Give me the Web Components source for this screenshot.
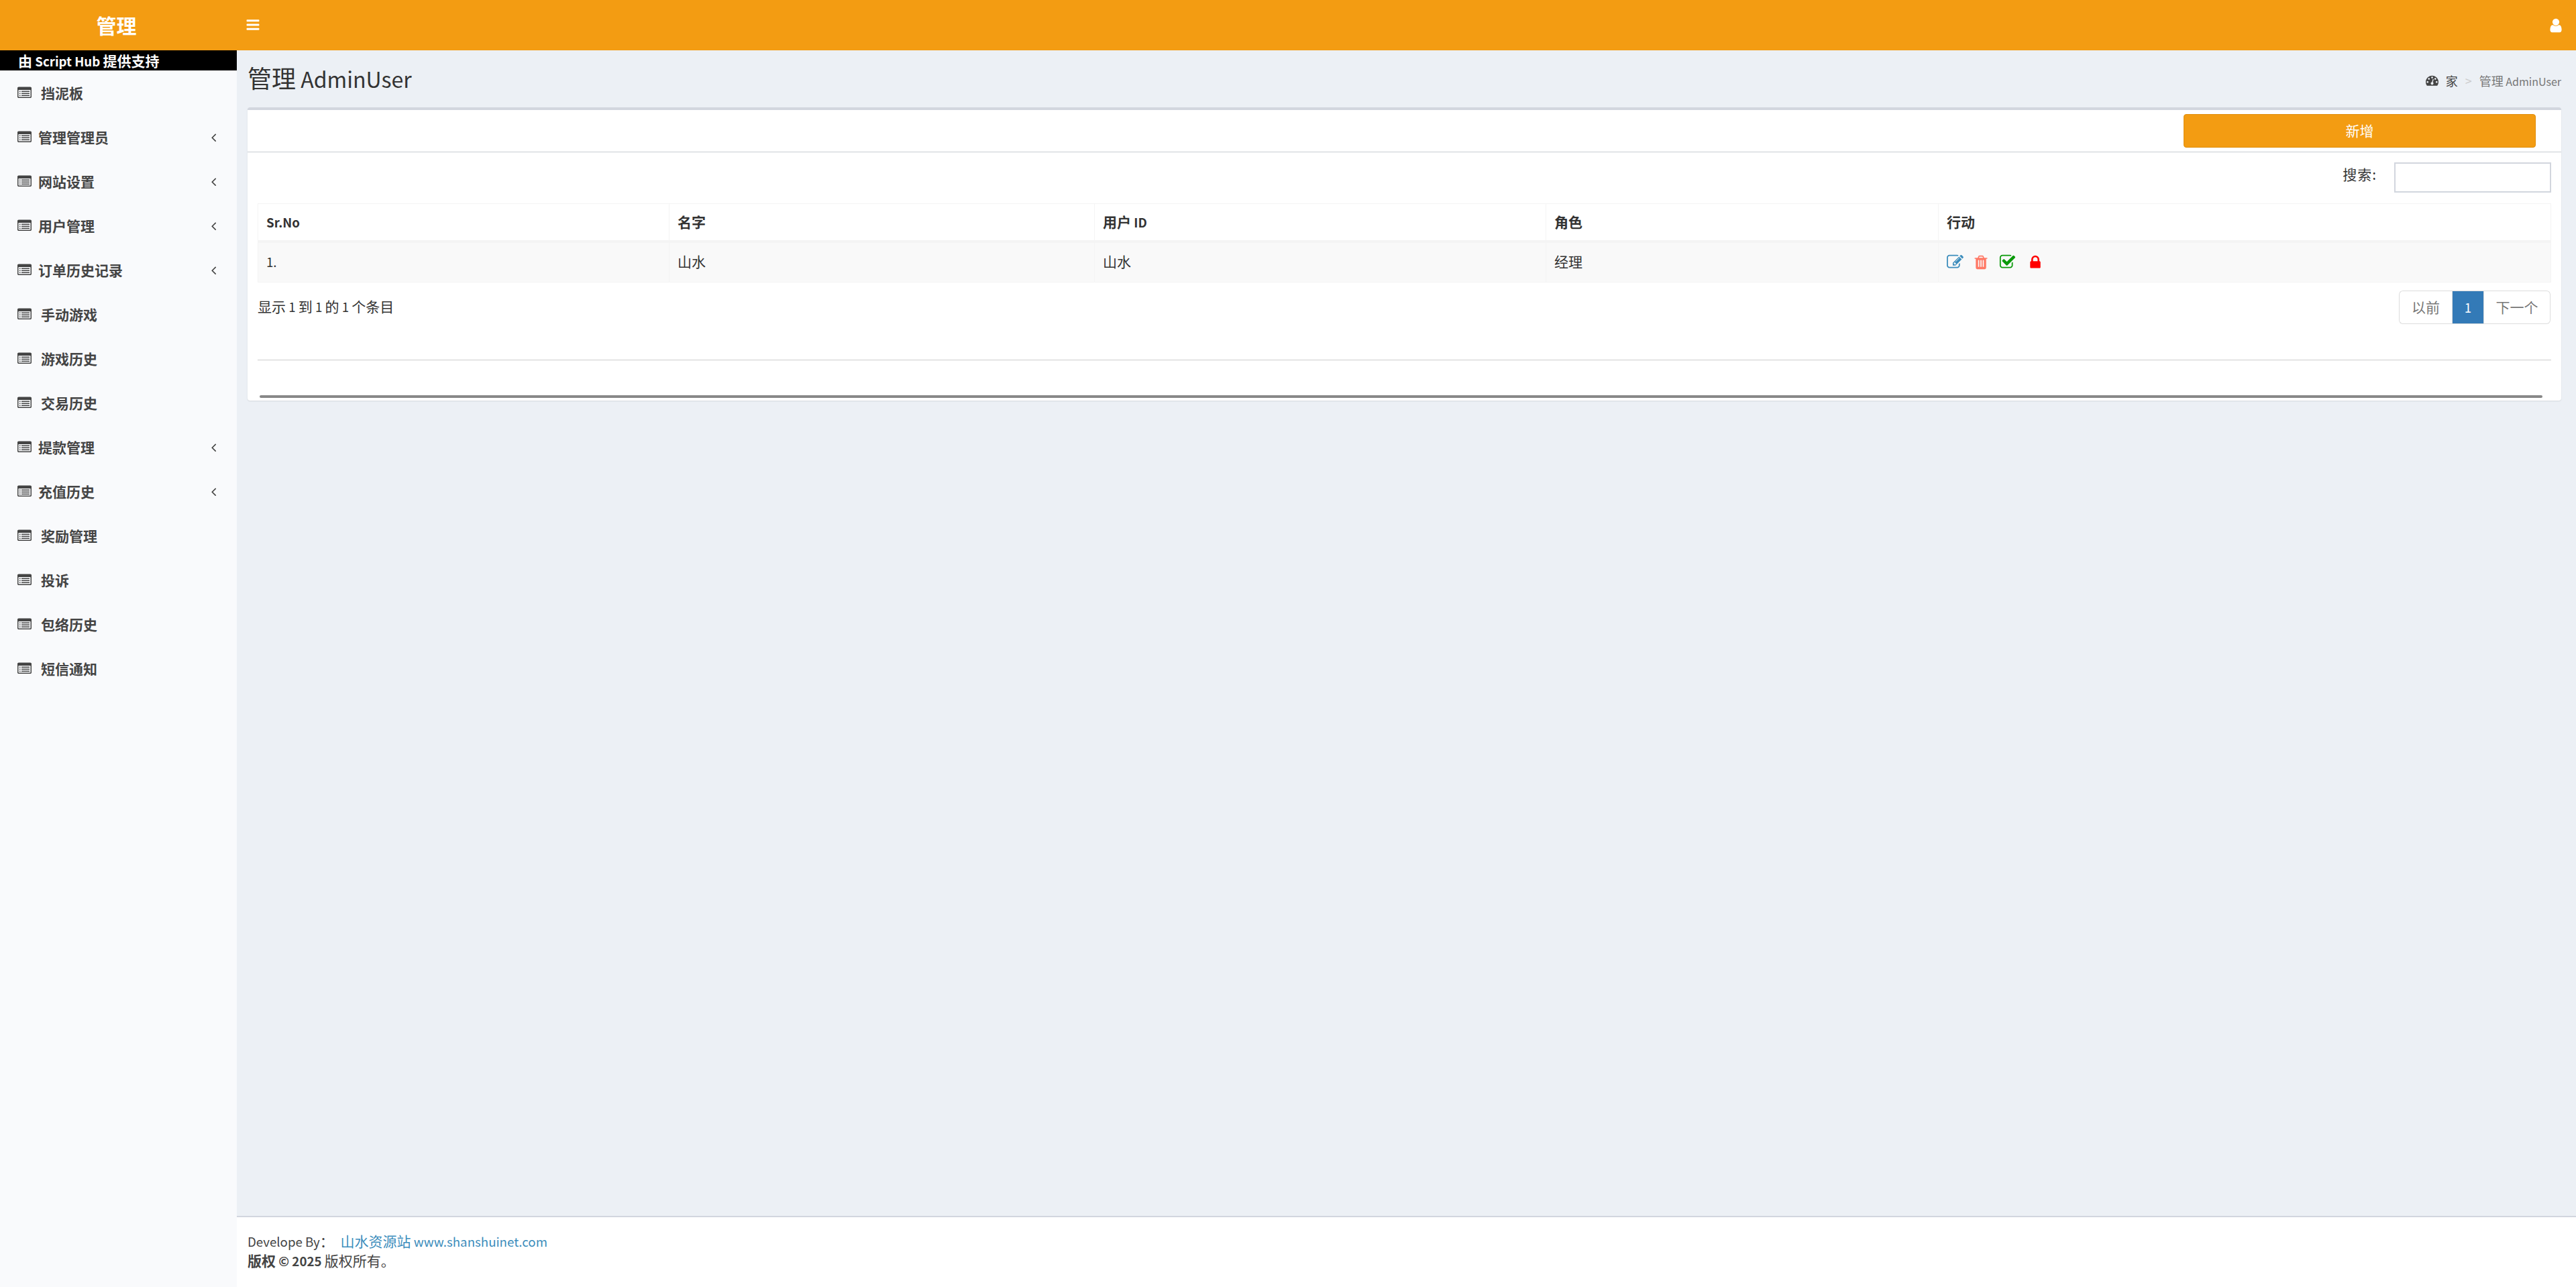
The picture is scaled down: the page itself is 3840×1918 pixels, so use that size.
<!DOCTYPE html>
<html lang="zh">
<head>
<meta charset="utf-8">
<title>管理 AdminUser</title>
<style>
html, body { margin:0; height:100%; }
body {
  font-family:"Noto Sans CJK SC","Noto Sans",sans-serif;
  font-size:21px;
  color:#333;
  background:#ecf0f5;
  overflow:hidden;
}
</style>
</head>
<body>
<admin-shell>
  <top-bar slot="top" brand="管理"></top-bar>
  <side-bar slot="side">
    <nav-item label="挡泥板"></nav-item>
    <nav-item label="管理管理员" sub></nav-item>
    <nav-item label="网站设置" sub></nav-item>
    <nav-item label="用户管理" sub></nav-item>
    <nav-item label="订单历史记录" sub></nav-item>
    <nav-item label="手动游戏"></nav-item>
    <nav-item label="游戏历史"></nav-item>
    <nav-item label="交易历史"></nav-item>
    <nav-item label="提款管理" sub></nav-item>
    <nav-item label="充值历史" sub></nav-item>
    <nav-item label="奖励管理"></nav-item>
    <nav-item label="投诉"></nav-item>
    <nav-item label="包络历史"></nav-item>
    <nav-item label="短信通知"></nav-item>
  </side-bar>
  <page-title slot="main"></page-title>
  <user-panel slot="main"></user-panel>
  <page-footer slot="foot"></page-footer>
</admin-shell>

<script>
/* icon paths, 1792 box */
const ICONS = {
  bars:"M1664 1344v128q0 26-19 45t-45 19h-1408q-26 0-45-19t-19-45v-128q0-26 19-45t45-19h1408q26 0 45 19t19 45zm0-512v128q0 26-19 45t-45 19h-1408q-26 0-45-19t-19-45v-128q0-26 19-45t45-19h1408q26 0 45 19t19 45zm0-512v128q0 26-19 45t-45 19h-1408q-26 0-45-19t-19-45v-128q0-26 19-45t45-19h1408q26 0 45 19t19 45z",
  user:"M1536 1399q0 109-62.5 187t-150.5 78h-854q-88 0-150.5-78t-62.5-187q0-85 8.5-160.5t31.5-152 58.5-131 94-89 134.5-34.5q131 128 313 128t313-128q76 0 134.5 34.5t94 89 58.5 131 31.5 152 8.5 160.5zm-256-887q0 159-112.5 271.5t-271.5 112.5-271.5-112.5-112.5-271.5 112.5-271.5 271.5-112.5 271.5 112.5 112.5 271.5z",
  list:"M384 1184v64q0 13-9.5 22.5t-22.5 9.5h-64q-13 0-22.5-9.5t-9.5-22.5v-64q0-13 9.5-22.5t22.5-9.5h64q13 0 22.5 9.5t9.5 22.5zm0-256v64q0 13-9.5 22.5t-22.5 9.5h-64q-13 0-22.5-9.5t-9.5-22.5v-64q0-13 9.5-22.5t22.5-9.5h64q13 0 22.5 9.5t9.5 22.5zm0-256v64q0 13-9.5 22.5t-22.5 9.5h-64q-13 0-22.5-9.5t-9.5-22.5v-64q0-13 9.5-22.5t22.5-9.5h64q13 0 22.5 9.5t9.5 22.5zm1152 512v64q0 13-9.5 22.5t-22.5 9.5h-960q-13 0-22.5-9.5t-9.5-22.5v-64q0-13 9.5-22.5t22.5-9.5h960q13 0 22.5 9.5t9.5 22.5zm0-256v64q0 13-9.5 22.5t-22.5 9.5h-960q-13 0-22.5-9.5t-9.5-22.5v-64q0-13 9.5-22.5t22.5-9.5h960q13 0 22.5 9.5t9.5 22.5zm0-256v64q0 13-9.5 22.5t-22.5 9.5h-960q-13 0-22.5-9.5t-9.5-22.5v-64q0-13 9.5-22.5t22.5-9.5h960q13 0 22.5 9.5t9.5 22.5zm128 704v-832q0-13-9.5-22.5t-22.5-9.5h-1472q-13 0-22.5 9.5t-9.5 22.5v832q0 13 9.5 22.5t22.5 9.5h1472q13 0 22.5-9.5t9.5-22.5zm128-1088v1088q0 66-47 113t-113 47h-1472q-66 0-113-47t-47-113v-1088q0-66 47-113t113-47h1472q66 0 113 47t47 113z",
  angle:"M1203 544q0 13-10 23l-393 393 393 393q10 10 10 23t-10 23l-50 50q-10 10-23 10t-23-10l-466-466q-10-10-10-23t10-23l466-466q10-10 23-10t23 10l50 50q10 10 10 23z",
  gauge:"M384 1152q0-53-37.5-90.5t-90.5-37.5-90.5 37.5-37.5 90.5 37.5 90.5 90.5 37.5 90.5-37.5 37.5-90.5zm192-448q0-53-37.5-90.5t-90.5-37.5-90.5 37.5-37.5 90.5 37.5 90.5 90.5 37.5 90.5-37.5 37.5-90.5zm428 481l101-382q6-26-7.5-48.5t-38.5-29.5-48 6.5-30 39.5l-101 382q-60 5-107 43.5t-63 98.5q-20 77 20 146t117 89 146-20 89-117q16-60-6-117t-72-91zm660-33q0-53-37.5-90.5t-90.5-37.5-90.5 37.5-37.5 90.5 37.5 90.5 90.5 37.5 90.5-37.5 37.5-90.5zm-640-640q0-53-37.5-90.5t-90.5-37.5-90.5 37.5-37.5 90.5 37.5 90.5 90.5 37.5 90.5-37.5 37.5-90.5zm448 192q0-53-37.5-90.5t-90.5-37.5-90.5 37.5-37.5 90.5 37.5 90.5 90.5 37.5 90.5-37.5 37.5-90.5zm320 448q0 261-141 483-19 29-54 29h-1402q-35 0-54-29-141-221-141-483 0-182 71-348t191-286 286-191 348-71 348 71 286 191 191 286 71 348z",
  edit:"M888 1184l116-116-152-152-116 116v56h96v96h56zm440-720q-16-16-33 1l-350 350q-17 17-1 33t33-1l350-350q17-17 1-33zm80 594v190q0 119-84.5 203.5t-203.5 84.5h-832q-119 0-203.5-84.5t-84.5-203.5v-832q0-119 84.5-203.5t203.5-84.5h832q63 0 117 25 15 7 18 23 3 17-9 29l-49 49q-14 14-32 8-23-6-45-6h-832q-66 0-113 47t-47 113v832q0 66 47 113t113 47h832q66 0 113-47t47-113v-126q0-13 9-22l64-64q15-15 35-7t20 29zm-96-738l288 288-672 672h-288v-288zm444 132l-92 92-288-288 92-92q28-28 68-28t68 28l152 152q28 28 28 68t-28 68z",
  trash:"M704 1376v-704q0-14-9-23t-23-9h-64q-14 0-23 9t-9 23v704q0 14 9 23t23 9h64q14 0 23-9t9-23zm256 0v-704q0-14-9-23t-23-9h-64q-14 0-23 9t-9 23v704q0 14 9 23t23 9h64q14 0 23-9t9-23zm256 0v-704q0-14-9-23t-23-9h-64q-14 0-23 9t-9 23v704q0 14 9 23t23 9h64q14 0 23-9t9-23zm-544-992h448l-48-117q-7-9-17-11h-317q-10 2-17 11zm928 32v64q0 14-9 23t-23 9h-96v948q0 83-47 143.5t-113 60.5h-832q-66 0-113-59t-47-142v-952h-96q-14 0-23-9t-9-23v-64q0-14 9-23t23-9h309l70-167q15-37 54-63t79-26h320q40 0 79 26t54 63l70 167h309q14 0 23 9t9 23z",
  check:"M1472 930v318q0 119-84.5 203.5t-203.5 84.5h-832q-119 0-203.5-84.5t-84.5-203.5v-832q0-119 84.5-203.5t203.5-84.5h832q63 0 117 25 15 7 18 23 3 17-9 29l-49 49q-10 10-23 10-3 0-9-2-23-6-45-6h-832q-66 0-113 47t-47 113v832q0 66 47 113t113 47h832q66 0 113-47t47-113v-254q0-13 9-22l64-64q10-10 23-10 6 0 12 3 20 8 20 29zm231-489l-814 814q-24 24-57 24t-57-24l-430-430q-24-24-24-57t24-57l110-110q24-24 57-24t57 24l263 263 647-647q24-24 57-24t57 24l110 110q24 24 24 57t-24 57z",
  lock:"M640 768h512v-192q0-106-75-181t-181-75-181 75-75 181v192zm832 96v576q0 40-28 68t-68 28h-960q-40 0-68-28t-28-68v-576q0-40 28-68t68-28h32v-192q0-184 132-316t316-132 316 132 132 316v192h32q40 0 68 28t28 68z"
};

function icon(name,size,color) {
  return `<svg width="${size}" height="${size}" viewBox="0 0 1792 1792" fill="${color}" style="display:block;flex:none"><path d="${ICONS[name]}"/></svg>`;
}

// latin runs sit a bit smaller than the CJK, the CJK font's latin is wide
const LAT = `.lat { font-size:.89em; }`;

class Base extends HTMLElement {
  constructor() {
    super();
    this.attachShadow({mode:'open'});
  }
}

class AdminShell extends Base {
  connectedCallback() {
    this.shadowRoot.innerHTML = `
<style>
:host { display:grid; grid-template-columns:353px 1fr; grid-template-rows:75px 1fr; height:1918px; }
.top { grid-column:1 / 3; }
.side { display:flex; min-height:0; }
.right { display:flex; flex-direction:column; min-width:0; }
.main { flex:1; padding:0 22px 0 16px; }
</style>
<div class="top"><slot name="top"></slot></div>
<div class="side"><slot name="side"></slot></div>
<div class="right">
  <div class="main"><slot name="main"></slot></div>
  <slot name="foot"></slot>
</div>`;
  }
}

class TopBar extends Base {
  connectedCallback() {
    this.shadowRoot.innerHTML = `
<style>
:host { display:flex; height:75px; background:#f39c12; color:#fff; align-items:center; }
.brand { width:353px; text-align:center; font-size:30px; font-weight:700; line-height:75px; box-sizing:border-box; padding-right:6px; }
.burger { margin-left:13px; margin-top:-2px; }
.user { margin-left:auto; margin-right:18px; }
</style>
<div class="brand">${this.getAttribute('brand')}</div>
<div class="burger">${icon('bars',22,'#fff')}</div>
<div class="user">${icon('user',24,'#fff')}</div>`;
  }
}

class SideBar extends Base {
  connectedCallback() {
    this.shadowRoot.innerHTML = `
<style>
${LAT}
:host { display:block; width:353px; background:#f9fafc; }
.power { height:30px; line-height:30px; background:#000; color:#fff; font-weight:700; font-size:21px; padding-left:27px; white-space:nowrap; }
</style>
<div class="power">由<span class="lat"> Script Hub </span>提供支持</div>
<nav><slot></slot></nav>`;
  }
}

class NavItem extends Base {
  connectedCallback() {
    const sub = this.hasAttribute('sub');
    this.shadowRoot.innerHTML = `
<style>
:host { display:flex; align-items:center; height:66px; padding-left:26px; padding-right:24px; color:#444; font-weight:700; font-size:21px; }
.label { margin-left:${sub ? 10 : 14}px; white-space:nowrap; }
.arrow { margin-left:auto; }
</style>
${icon('list',21,'#444')}
<span class="label">${this.getAttribute('label')}</span>
${sub ? `<span class="arrow">${icon('angle',21,'#444')}</span>` : ''}`;
  }
}

class PageTitle extends Base {
  connectedCallback() {
    this.shadowRoot.innerHTML = `
<style>
${LAT}
:host { display:flex; height:85px; align-items:center; justify-content:space-between; }
h1 { margin:-4px 0 0; font-size:36px; font-weight:400; color:#333; line-height:1; }
ol { margin:4px 0 0; padding:0; list-style:none; display:flex; align-items:center; font-size:18px; color:#444; }
.gauge { margin-right:11px; }
.sep { color:#ccc; margin:0 11px; }
.cur { color:#777; }
</style>
<h1>管理<span class="lat"> AdminUser</span></h1>
<ol>
  <li class="gauge">${icon('gauge',19,'#444')}</li>
  <li>家</li>
  <li class="sep">&gt;</li>
  <li class="cur">管理<span class="lat"> AdminUser</span></li>
</ol>`;
  }
}

class UserPanel extends Base {
  connectedCallback() {
    this.shadowRoot.innerHTML = `
<style>
${LAT}
:host { display:block; background:#fff; border-top:4px solid #d2d6de; border-radius:4px; box-shadow:0 1px 2px rgba(0,0,0,.1); }
.head { height:63px; box-sizing:border-box; border-bottom:1px solid #c8ccd2; padding:6px 38px 0 0; display:flex; justify-content:flex-end; }
.add { width:525px; height:50px; box-sizing:border-box; background:#f39c12; border:1px solid #e08e0b; border-radius:4px; color:#fff; font:400 21px "Noto Sans CJK SC",sans-serif; padding:0 0 2px; }
.body { padding:15px 15px 0; }
.search { display:flex; justify-content:flex-end; align-items:center; height:45px; margin-bottom:16px; }
.search label { margin-right:26px; margin-top:-11px; letter-spacing:1px; }
.search input { width:234px; height:45px; box-sizing:border-box; border:2px solid #d2d6de; background:#fff; padding:0; }
table { width:100%; table-layout:fixed; border-collapse:collapse; border:1px solid #f4f4f4; font-size:21px; }
th { height:51px; padding:0 12px 3px; text-align:left; font-weight:700; border-left:1px solid #f4f4f4; border-bottom:4px solid #f4f4f4; color:#333; }
td { height:54px; padding:0 12px 4px; border-left:1px solid #f4f4f4; background:#f9f9f9; color:#333; }
.acts { display:flex; align-items:center; margin-top:3px; }
.foot { display:flex; justify-content:space-between; margin-top:12px; }
.info { line-height:46px; }
.pager { display:flex; height:50px; margin-right:1px; font-size:21px; color:#777; line-height:46px; }
.pager span.b { box-sizing:border-box; border:1px solid #ddd; text-align:center; }
.prev { width:79px; border-radius:6px 0 0 6px; border-right:0 !important; }
.pager .cur { width:48px; background:#337ab7; border-color:#337ab7; color:#fff; }
.next { width:99px; border-radius:0 6px 6px 0; border-left:0 !important; }
hr { height:1px; border:0; margin:53px 0 0; background:#ccc; }
.line { height:4px; margin:52px 13px 0 3px; border-radius:2px; background:#888; }
.tail { height:4px; }
</style>
<div class="head"><button class="add">新增</button></div>
<div class="body">
  <div class="search"><label>搜索:</label><input type="text"></div>
  <table>
    <colgroup><col style="width:613px"><col style="width:634px"><col style="width:673px"><col style="width:585px"><col></colgroup>
    <thead><tr><th><span class="lat">Sr.No</span></th><th>名字</th><th>用户<span class="lat"> ID</span></th><th>角色</th><th>行动</th></tr></thead>
    <tbody><tr>
      <td><span class="lat">1.</span></td><td>山水</td><td>山水</td><td>经理</td>
      <td><div class="acts">
        <span style="margin-right:13.5px">${icon('edit',25,'#3c8dbc')}</span>
        <span style="margin-right:15.5px">${icon('trash',24,'#ff7966')}</span>
        <span style="margin-right:17px">${icon('check',25,'#0a9a0a')}</span>
        <span>${icon('lock',24,'#ff0000')}</span>
      </div></td>
    </tr></tbody>
  </table>
  <div class="foot">
    <div class="info">显示<span class="lat"> 1 </span>到<span class="lat"> 1 </span>的<span class="lat"> 1 </span>个条目</div>
    <div class="pager"><span class="b prev">以前</span><span class="b cur"><span class="lat">1</span></span><span class="b next">下一个</span></div>
  </div>
  <hr>
  <div class="line"></div>
</div>
<div class="tail"></div>`;
  }
}

class PageFooter extends Base {
  connectedCallback() {
    this.shadowRoot.innerHTML = `
<style>
${LAT}
:host { display:block; height:106px; box-sizing:border-box; background:#fff; border-top:2px solid #d2d6de; padding:21px 16px 0; color:#444; font-size:21px; line-height:29px; }
a { color:#3c8dbc; text-decoration:none; margin-left:5px; }
</style>
<div><span class="lat">Develope By</span>： <a href="#">山水资源站<span class="lat"> www.shanshuinet.com</span></a></div>
<div><b>版权<span class="lat"> © 2025 </span></b>版权所有。</div>`;
  }
}

customElements.define('admin-shell',AdminShell);
customElements.define('top-bar',TopBar);
customElements.define('side-bar',SideBar);
customElements.define('nav-item',NavItem);
customElements.define('page-title',PageTitle);
customElements.define('user-panel',UserPanel);
customElements.define('page-footer',PageFooter);
</script>
</body>
</html>
